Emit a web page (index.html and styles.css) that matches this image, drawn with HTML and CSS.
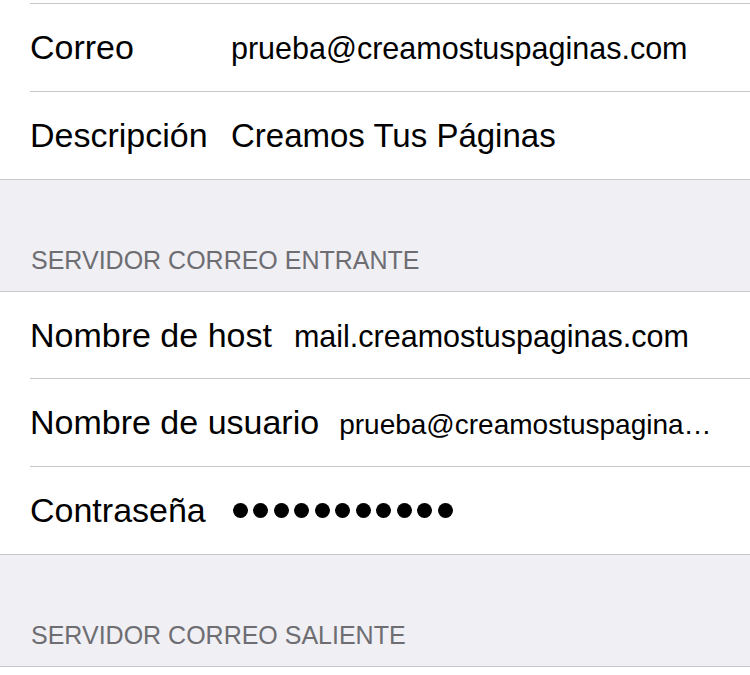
FILE: index.html
```html
<!DOCTYPE html>
<html lang="es">
<head>
<meta charset="utf-8">
<title>Cuenta de correo</title>
<link rel="stylesheet" href="styles.css">
</head>
<body>
<main class="settings">
  <section class="group group-first">
    <div class="row">
      <span class="label label-fixed">Correo</span>
      <span class="value value-md">prueba@creamostuspaginas.com</span>
    </div>
    <div class="row">
      <span class="label label-fixed">Descripción</span>
      <span class="value value-lg">Creamos Tus Páginas</span>
    </div>
  </section>

  <header class="section-header">SERVIDOR CORREO ENTRANTE</header>

  <section class="group group-second">
    <div class="row row-short">
      <span class="label">Nombre de host</span>
      <span class="value value-md gap-host">mail.creamostuspaginas.com</span>
    </div>
    <div class="row">
      <span class="label">Nombre de usuario</span>
      <span class="value value-sm gap-user" title="prueba@creamostuspaginas.com">prueba@creamostuspagina…</span>
    </div>
    <div class="row">
      <span class="label">Contraseña</span>
      <span class="dots gap-pass" aria-label="contraseña oculta">
        <i></i><i></i><i></i><i></i><i></i><i></i><i></i><i></i><i></i><i></i><i></i>
      </span>
    </div>
  </section>

  <header class="section-header">SERVIDOR CORREO SALIENTE</header>

  <section class="group group-last"></section>
</main>
</body>
</html>
```

FILE: styles.css
```css
html, body {
  margin: 0;
  padding: 0;
  background: #ffffff;
}

body {
  font-family: "Liberation Sans", Arial, sans-serif;
  color: #000;
  width: 750px;
  height: 675px;
  overflow: hidden;
}

.settings {
  display: flex;
  flex-direction: column;
}

.group {
  background: #fff;
  border-top: 1px solid #c8c7cc;
  border-bottom: 1px solid #c8c7cc;
}

.group-first {
  border-top: none;
  padding-top: 3px;
}

.group-last {
  border-bottom: none;
  height: 20px;
}

.row {
  display: flex;
  align-items: baseline;
  margin-left: 30px;
  padding-right: 30px;
  height: 87px;
  border-top: 1px solid #c8c7cc;
}

.group .row:first-child {
  border-top: none;
}

.group-first .row:first-child {
  border-top: 1px solid #c8c7cc;
}

.row-short {
  height: 86px;
}

.label {
  font-size: 34px;
  line-height: 87px;
  white-space: nowrap;
  flex: none;
}

.row-short .label {
  line-height: 86px;
}

.label-fixed {
  width: 201px;
}

.value {
  white-space: nowrap;
  min-width: 0;
  flex: 0 1 auto;
}

.value-lg { font-size: 33px; }
.value-md { font-size: 30.5px; }
.value-sm { font-size: 28px; }

.gap-host { margin-left: 22px; }
.gap-user { margin-left: 20px; }
.gap-pass { margin-left: 27px; }

.dots {
  align-self: center;
  display: flex;
  gap: 5.5px;
}

.dots i {
  display: block;
  width: 15px;
  height: 15px;
  border-radius: 50%;
  background: #000;
}

.section-header {
  background: #efeff4;
  color: #6d6d72;
  font-size: 25px;
  line-height: 30px;
  padding: 65px 0 16px 31px;
}
```
